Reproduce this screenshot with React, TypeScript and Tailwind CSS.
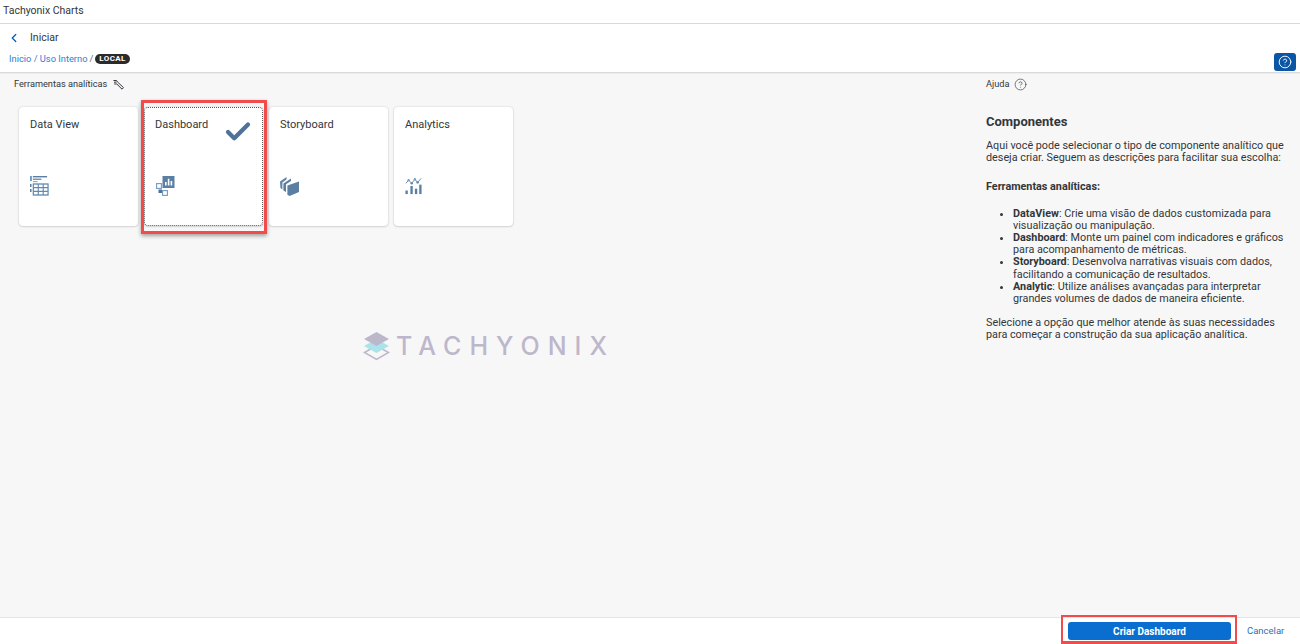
import React from "react";
import { ChevronLeft, CircleHelp, Check } from "lucide-react";

const TableIcon = () => (
  <svg width="19" height="20" viewBox="0 0 20 20" preserveAspectRatio="none" className="block">
    <rect x="0" y="0" width="2" height="5" fill="#6f9bc4" />
    <rect x="3" y="0" width="15" height="1.4" fill="#5a7fa3" />
    <rect x="3" y="2.6" width="9" height="1.2" fill="#5a7fa3" />
    <rect x="3" y="5" width="5" height="1.2" fill="#8fb3d4" />
    <rect x="0" y="8" width="1.6" height="3" fill="#5a7fa3" />
    <rect x="0" y="13" width="1.6" height="3" fill="#5a7fa3" />
    <rect x="3.5" y="8" width="15.5" height="11" fill="none" stroke="#5f8ab3" strokeWidth="1.3" />
    <path d="M8.7 8v11M13.9 8v11M3.5 11.7h15.5M3.5 15.3h15.5" stroke="#5f8ab3" strokeWidth="1.2" />
  </svg>
);

const DashIcon = () => (
  <svg width="20" height="20" viewBox="0 0 20 20" className="block">
    <rect x="7.5" y="0" width="12" height="12" fill="#5a7fa3" />
    <path d="M10 9.5V6h1.6v3.5zM12.8 9.5V2.8h1.6v6.7zM15.6 9.5V5h1.6v4.5z" fill="#ffffff" />
    <rect x="1.6" y="7.6" width="4.8" height="4.8" fill="none" stroke="#6f9bc4" strokeWidth="1.1" />
    <rect x="3.5" y="13.5" width="3.5" height="3.5" fill="#4f7299" />
    <rect x="7.6" y="14.6" width="4.8" height="4.8" fill="none" stroke="#6f9bc4" strokeWidth="1.1" />
  </svg>
);

const StoryIcon = () => (
  <svg width="20" height="20" viewBox="0 0 20 20" className="block">
    <path d="M0 5.5 6.5 1v2.4L2.4 6.4v7L.4 12z" fill="#5f86ad" />
    <path d="M3.4 7.5 11 2.6V5L6 8.2V16l-2.6-1.6z" fill="#5a7fa3" />
    <path d="M7.4 9.4 19 5.4V16L9.6 20l-2.2-1.2z" fill="#5a7fa3" />
  </svg>
);

const AnalyticIcon = () => (
  <svg width="18" height="18" viewBox="0 0 20 20" className="mt-[1px] block">
    <path d="M1 7 4 3.5 7.5 7 11 2.5 14 6 18 1.5" fill="none" stroke="#5a7fa3" strokeWidth="1" />
    <circle cx="4" cy="3.5" r="1.3" fill="#6f9bc4" />
    <circle cx="7.5" cy="7" r="1.3" fill="#5a7fa3" />
    <circle cx="11" cy="2.5" r="1.3" fill="#6f9bc4" />
    <circle cx="14" cy="6" r="1.3" fill="#5a7fa3" />
    <rect x="0.5" y="15" width="2.6" height="4" fill="#5a7fa3" />
    <rect x="6" y="10" width="2.6" height="9" fill="#5a7fa3" />
    <rect x="11" y="13" width="2.6" height="6" fill="#5a7fa3" />
    <rect x="15.8" y="8.5" width="2.6" height="10.5" fill="#5a7fa3" />
  </svg>
);

const Wrench = () => (
  <svg width="11" height="11" viewBox="0 0 11 11" className="block">
    <path d="M0.5 1.5h3l1 1.5L10.5 8.6 9 10.2 3.8 5H1.2M3.5 3.2H1" fill="none" stroke="#32363a" strokeWidth="1" />
  </svg>
);

const LogoMark = () => (
  <svg width="27" height="30" viewBox="0 0 27 30" className="block">
    <path d="M1.5 21.5 13.5 14.5l12 7-12 7z" fill="none" stroke="#bdb7cc" strokeWidth="1.5" />
    <path d="M1 15 13.5 8 26 15l-12.5 7z" fill="#abe3ea" />
    <path d="M1 8 13.5 1 26 8l-12.5 7z" fill="#bdb7cc" />
  </svg>
);

function Card({ title, icon, selected }: { title: string; icon: React.ReactNode; selected?: boolean }) {
  return (
    <div
      className={`relative w-[119px] h-[119px] bg-white rounded-[4px] shadow-[0_0_2px_rgba(0,0,0,0.18),0_1px_2px_rgba(0,0,0,0.1)] pl-[11px] ${
        selected ? "outline-1 outline-dotted outline-[#555] -outline-offset-[1px]" : ""
      }`}
    >
      <div className="pt-[11px] text-[11px] leading-[13px] text-[#32363a]">{title}</div>
      <div className="absolute left-[11px] top-[69px]">{icon}</div>
      {selected && (
        <Check className="absolute right-[10px] top-[10px] text-[#4f7299]" size={30} strokeWidth={3.4} />
      )}
    </div>
  );
}

export default function App() {
  return (
    <div
      className="flex flex-col w-[1300px] h-[644px] overflow-hidden bg-[#f7f7f7] text-[#32363a]"
      style={{ fontFamily: 'Roboto, "Liberation Sans", sans-serif' }}
    >
      <header className="h-6 shrink-0 bg-white border-b border-[#d9d9d9] px-[3px] text-[10.5px] leading-[21px]">
        Tachyonix Charts
      </header>
      <div className="relative h-[49px] shrink-0 bg-white border-b border-[#d9d9d9] shadow-[0_1px_1px_rgba(0,0,0,0.04)]">
        <div className="flex items-center h-[27px] pl-[7px]">
          <ChevronLeft size={14} strokeWidth={2.2} className="text-[#0a5eb0]" />
          <span className="ml-[9px] text-[10.5px]">Iniciar</span>
        </div>
        <div className="flex items-center gap-[2px] pl-[9px] pt-[1px] text-[9.3px] leading-[14px]">
          <span className="text-[#2f80d5]">Inicio / Uso Interno</span>
          <span className="text-[#5a6a78]">/</span>
          <span className="rounded-full bg-[#2b2b2b] px-[4px] text-[8px] leading-[10px] font-bold tracking-[0.4px] text-white">
            LOCAL
          </span>
        </div>
        <button className="absolute right-[4px] top-[29px] flex h-[18px] w-[22px] items-center justify-center rounded-[3px] bg-[#0a56a5] text-white">
          <CircleHelp size={14} strokeWidth={1.6} />
        </button>
      </div>
      <main className="flex flex-1 min-h-0">
        <section className="flex flex-col w-[975px] shrink-0">
          <div className="flex items-center gap-[6px] pl-[14px] pt-[4px] text-[9.2px] leading-[14px]">
            Ferramentas analíticas <Wrench />
          </div>
          <div className="flex gap-[6px] pl-[19px] pt-[16px]">
            <Card title="Data View" icon={<TableIcon />} />
            <Card title="Dashboard" icon={<DashIcon />} selected />
            <Card title="Storyboard" icon={<StoryIcon />} />
            <Card title="Analytics" icon={<AnalyticIcon />} />
          </div>
          <div className="flex items-center justify-center gap-[6px] pl-[3px] pt-[105px]">
            <LogoMark />
            <span
              className="text-[25px] leading-[29px] font-medium tracking-[8px] text-[#bdb7cc]"
              style={{ fontFamily: 'Inter, sans-serif' }}
            >
              TACHYONIX
            </span>
          </div>
        </section>
        <aside className="w-[315px] pl-[11px] text-[10.8px] leading-[12.2px]">
          <div className="flex items-center gap-[5px] pt-[4px] text-[9.2px] leading-[14px]">
            Ajuda <CircleHelp size={13} strokeWidth={1.2} />
          </div>
          <h2 className="mt-[22px] text-[13px] leading-[17px] font-bold">Componentes</h2>
          <p className="mt-[10px]">
            Aqui você pode selecionar o tipo de componente analítico que deseja criar. Seguem as descrições para facilitar sua escolha:
          </p>
          <p className="mt-[17px] font-bold">Ferramentas analíticas:</p>
          <ul className="mt-[14px] list-disc pl-[27px]">
            <li><b>DataView</b>: Crie uma visão de dados customizada para visualização ou manipulação.</li>
            <li><b>Dashboard</b>: Monte um painel com indicadores e gráficos para acompanhamento de métricas.</li>
            <li><b>Storyboard</b>: Desenvolva narrativas visuais com dados, facilitando a comunicação de resultados.</li>
            <li><b>Analytic</b>: Utilize análises avançadas para interpretar grandes volumes de dados de maneira eficiente.</li>
          </ul>
          <p className="mt-[12px]">
            Selecione a opção que melhor atende às suas necessidades para começar a construção da sua aplicação analítica.
          </p>
        </aside>
      </main>
      <footer className="flex h-[27px] shrink-0 items-center justify-end bg-white border-t border-[#e5e5e5]">
        <button className="h-[18px] w-[163px] rounded-[3px] bg-[#0a6ed1] text-[10px] font-bold text-white">
          Criar Dashboard
        </button>
        <button className="ml-[16px] mr-[16px] w-[37px] text-[9.5px] text-[#2f6fb0]">Cancelar</button>
      </footer>
      <div className="absolute left-[141px] top-[100px] h-[134px] w-[126px] border-[3px] border-[#f24b4b] shadow-[0_2px_4px_rgba(0,0,0,0.35)]" />
      <div className="absolute left-[1061px] top-[615px] h-[29px] w-[176px] border-[2px] border-b-[3px] border-[#f24b4b]" />
    </div>
  );
}
